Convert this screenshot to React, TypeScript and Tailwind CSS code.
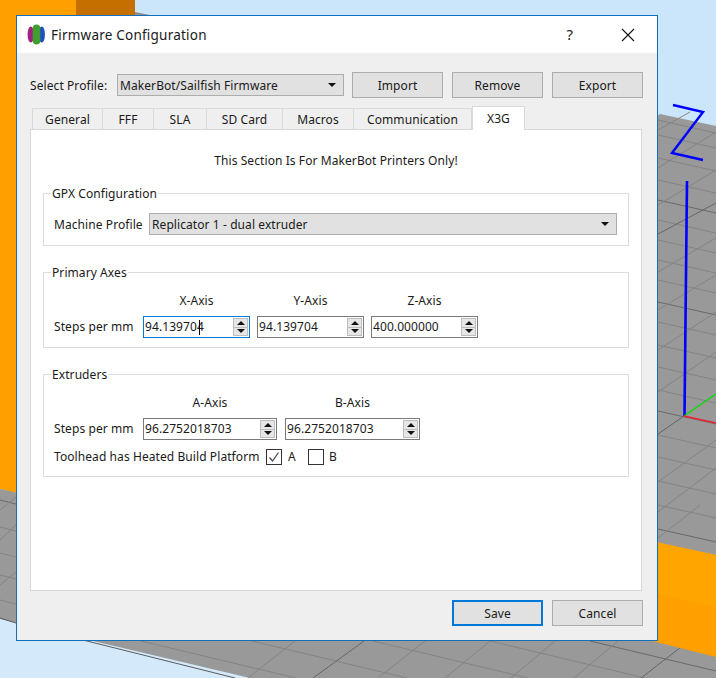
import React from "react";

const aRight = [120, 135, 158, 180, 220, 240, 260, 280, 322, 345, 367, 390, 435, 457, 481, 505];
const aRightDark = [200, 302, 411, 529];
const bRight: [number, number, number, number][] = [
  [658, 130, 690, 112], [658, 168, 716, 132], [658, 205, 716, 170], [658, 272, 716, 238], [658, 310, 716, 275], [658, 350, 716, 312], [658, 392, 716, 352],
  [658, 482, 716, 440], [658, 512, 716, 468], [658, 538, 700, 505],
];
const aBottom = [141, 252, 373, 490];
const bBottom: [number, number, number, number][] = [
  [248, 678, 295, 641], [378, 678, 425, 641], [445, 678, 490, 641], [511, 678, 555, 641], [574, 678, 618, 641],
];

function Scene() {
  return (
    <svg className="absolute left-0 top-0" width="716" height="678" viewBox="0 0 716 678">
      <rect width="716" height="678" fill="#cbe6fa" />
      <polygon points="0,618 250,678 0,678" fill="#d4e9f9" />
      <polygon points="0,0 76,0 76,20 16,20 16,493 0,489" fill="#ff9f00" />
      <polygon points="76,0 135,0 135,20 76,20" fill="#c46f00" />
      <polygon points="135,12 150,15 135,20" fill="#8f8f8f" />
      <polygon points="0,489 120,515 660,114 716,126 716,678 250,678 0,619" fill="#999999" />
      {aRight.map((y) => (
        <line key={y} x1="658" y1={y} x2="716" y2={y + 13} stroke="#848484" strokeWidth="1" />
      ))}
      {aRightDark.map((y) => (
        <line key={y} x1="658" y1={y} x2="716" y2={y + 13} stroke="#6a6a6a" strokeWidth="1" />
      ))}
      {bRight.map(([a, b, c, d]) => (
        <line key={`${a}-${b}`} x1={a} y1={b} x2={c} y2={d} stroke="#848484" strokeWidth="1" />
      ))}
      <line x1="658" y1="234" x2="716" y2="203" stroke="#666666" />
      <line x1="658" y1="434" x2="684" y2="416" stroke="#666666" />
      {aBottom.map((x) => (
        <line key={x} x1={x} y1="641" x2={x + 155} y2="678" stroke="#848484" />
      ))}
      <line x1="590" y1="641" x2="716" y2="671" stroke="#6a6a6a" />
      {bBottom.map(([a, b, c, d]) => (
        <line key={a} x1={a} y1={b} x2={c} y2={d} stroke="#848484" />
      ))}
      <line x1="313" y1="678" x2="364" y2="641" stroke="#666666" />
      <line x1="641" y1="678" x2="690" y2="640" stroke="#666666" />
      <polygon points="600,530 716,555 716,657 600,628" fill="#ff9f00" />
      <polygon points="600,530 716,555 716,607 600,580" fill="#ffa500" />
      <line x1="83" y1="640" x2="235" y2="678" stroke="#5c5c5c" strokeWidth="1" />
      <line x1="0" y1="618" x2="16" y2="623" stroke="#5c5c5c" />
      <line x1="0" y1="500" x2="16" y2="504" stroke="#6a6a6a" />
      <line x1="0" y1="527" x2="16" y2="531" stroke="#848484" />
      <line x1="0" y1="553" x2="16" y2="557" stroke="#848484" />
      <line x1="0" y1="575" x2="16" y2="579" stroke="#848484" />
      <line x1="0" y1="600" x2="16" y2="604" stroke="#848484" />
      <line x1="0" y1="510" x2="16" y2="497" stroke="#848484" />
      <line x1="0" y1="540" x2="16" y2="525" stroke="#848484" />
      <line x1="0" y1="585" x2="16" y2="572" stroke="#848484" />
      <polyline points="673,105 703,112 672,153 703,160" fill="none" stroke="#0000ff" strokeWidth="2.4" />
      <line x1="687" y1="181" x2="684.5" y2="416" stroke="#0000ff" strokeWidth="2.6" />
      <line x1="684" y1="416" x2="716" y2="394" stroke="#00e000" strokeWidth="1.4" />
      <line x1="684" y1="416" x2="716" y2="423" stroke="#f02030" strokeWidth="1.4" />
    </svg>
  );
}

function Arrow({ up, small }: { up?: boolean; small?: boolean }) {
  return (
    <svg width={small ? 8 : 9} height={small ? 4 : 5} viewBox="0 0 8 4" preserveAspectRatio="none">
      <polygon points={up ? "0,4 8,4 4,0" : "0,0 8,0 4,4"} fill="#111111" />
    </svg>
  );
}

function Combo({ label, className }: { label: string; className: string }) {
  return (
    <div className={`flex h-[22px] items-center justify-between border border-[#adadad] bg-[#e1e1e1] pl-[2px] pr-[7px] text-[#1a1a1a] ${className}`}>
      <span className="pt-px">{label}</span>
      <Arrow small />
    </div>
  );
}

function Button({ label, primary }: { label: string; primary?: boolean }) {
  return (
    <div className={`flex h-[26px] w-[91px] items-center justify-center bg-[#e1e1e1] pt-px text-[#1a1a1a] ${primary ? "border-2 border-[#0078d7]" : "border border-[#adadad]"}`}>
      {label}
    </div>
  );
}

function Spin({ value, className, focus, caret }: { value: string; className: string; focus?: boolean; caret?: boolean }) {
  return (
    <div className={`relative flex h-[22px] items-center justify-between border bg-white pl-[1px] pr-[1px] text-[#1a1a1a] ${focus ? "border-[#0078d7]" : "border-[#7a7a7a]"} ${className}`}>
      <span>{value}</span>
      {caret && <span className="absolute left-[55px] top-[3px] h-[15px] w-px bg-black" />}
      <div className="flex h-[18px] w-[15px] flex-col border border-[#bdbdbd] bg-[#e6e6e6]">
        <div className="flex flex-1 items-center justify-center border-b border-[#bdbdbd]"><Arrow up small /></div>
        <div className="flex flex-1 items-center justify-center"><Arrow small /></div>
      </div>
    </div>
  );
}

function Group({ title, className, children }: { title: string; className: string; children: React.ReactNode }) {
  return (
    <div className={`relative mx-[12px] border border-[#dcdcdc] pl-[10px] ${className}`}>
      <span className="absolute left-[7px] top-[-8px] bg-white px-px leading-[16px] text-[#1a1a1a]">{title}</span>
      {children}
    </div>
  );
}

function Check({ checked }: { checked?: boolean }) {
  return (
    <div className="flex h-[16px] w-[16px] items-center justify-center border border-[#333] bg-white">
      {checked && (
        <svg width="12" height="12" viewBox="0 0 12 12">
          <polyline points="1.5,6.5 4.5,10 10.5,1.5" fill="none" stroke="#444" strokeWidth="1.2" />
        </svg>
      )}
    </div>
  );
}

const tabs: [string, string][] = [
  ["General", "w-[71px]"],
  ["FFF", "w-[51px]"],
  ["SLA", "w-[53px]"],
  ["SD Card", "w-[76px]"],
  ["Macros", "w-[71px]"],
  ["Communication", "w-[118px]"],
];

export default function App() {
  return (
    <div className="relative h-[678px] w-[716px] overflow-hidden font-['Noto_Sans',sans-serif] text-[12px] tracking-[0.08px]">
      <Scene />
      <div className="absolute left-[16px] top-[15px] flex h-[626px] w-[642px] flex-col border border-[#0f6fb8] bg-[#efefef]">
        <div className="flex h-[37px] items-center bg-white pl-[10px] pr-[22px]">
          <svg width="19" height="21" viewBox="0 0 20 22">
            <ellipse cx="4" cy="11" rx="3.4" ry="8.5" fill="#a0207f" />
            <ellipse cx="15.5" cy="11" rx="3.4" ry="8.5" fill="#1f4fc0" />
            <rect x="6" y="0.5" width="8" height="21" rx="4" fill="#3f9f2f" />
          </svg>
          <span className="ml-[5px] pt-px text-[13.5px] tracking-[0.22px] text-[#1a1a1a]">Firmware Configuration</span>
          <span className="ml-auto mr-[48px] text-[15px] text-[#222]">?</span>
          <svg width="14" height="14" viewBox="0 0 14 14">
            <path d="M1 1 L13 13 M13 1 L1 13" stroke="#111" strokeWidth="1.1" />
          </svg>
        </div>

        <div className="mt-[19px] flex h-[26px] items-center pl-[13px]">
          <span className="w-[87px] pt-px text-[#1a1a1a]">Select Profile:</span>
          <Combo label="MakerBot/Sailfish Firmware" className="w-[227px]" />
          <div className="ml-[8px] flex gap-[9px]">
            <Button label="Import" />
            <Button label="Remove" />
            <Button label="Export" />
          </div>
        </div>

        <div className="relative z-10 mt-[8px] flex h-[24px] items-end pl-[15px]">
          {tabs.map(([label, w]) => (
            <div key={label} className={`flex h-[22px] items-center justify-center border border-b-0 border-l-0 border-[#d9d9d9] first:border-l ${w} text-[#1a1a1a]`}>
              {label}
            </div>
          ))}
          <div className="flex h-[24px] w-[53px] items-center justify-center border border-b-0 border-[#d9d9d9] bg-white text-[#1a1a1a]">X3G</div>
        </div>

        <div className="ml-[13px] mt-[-1px] h-[462px] w-[612px] border border-[#d9d9d9] bg-white">
          <div className="mt-[23px] h-[16px] text-center leading-[16px] text-[#1a1a1a]">This Section Is For MakerBot Printers Only!</div>

          <Group title="GPX Configuration" className="mt-[24px] h-[53px] pt-[19px]">
            <div className="flex items-center">
              <span className="w-[95px] pt-px text-[#1a1a1a]">Machine Profile</span>
              <Combo label="Replicator 1 - dual extruder" className="w-[468px]" />
            </div>
          </Group>

          <Group title="Primary Axes" className="mt-[26px] h-[76px] pt-[20px]">
            <div className="flex h-[16px] items-center pl-[89px] text-center text-[#1a1a1a]">
              <span className="w-[107px]">X-Axis</span>
              <span className="ml-[7px] w-[107px]">Y-Axis</span>
              <span className="ml-[7px] w-[107px]">Z-Axis</span>
            </div>
            <div className="mt-[7px] flex items-center">
              <span className="w-[89px] text-[#1a1a1a]">Steps per mm</span>
              <Spin value="94.139704" className="w-[107px]" focus caret />
              <Spin value="94.139704" className="ml-[7px] w-[107px]" />
              <Spin value="400.000000" className="ml-[7px] w-[107px]" />
            </div>
          </Group>

          <Group title="Extruders" className="mt-[26px] h-[103px] pt-[20px]">
            <div className="flex h-[16px] items-center pl-[89px] text-center text-[#1a1a1a]">
              <span className="w-[134px]">A-Axis</span>
              <span className="ml-[8px] w-[135px]">B-Axis</span>
            </div>
            <div className="mt-[7px] flex items-center">
              <span className="w-[89px] text-[#1a1a1a]">Steps per mm</span>
              <Spin value="96.2752018703" className="w-[134px]" />
              <Spin value="96.2752018703" className="ml-[8px] w-[135px]" />
            </div>
            <div className="mt-[7px] flex h-[20px] items-center text-[#1a1a1a]">
              <span className="w-[212px]">Toolhead has Heated Build Platform</span>
              <Check checked />
              <span className="ml-[6px] w-[20px]">A</span>
              <Check />
              <span className="ml-[5px]">B</span>
            </div>
          </Group>
        </div>

        <div className="mt-[9px] flex justify-end gap-[9px] pr-[14px]">
          <Button label="Save" primary />
          <Button label="Cancel" />
        </div>
      </div>
    </div>
  );
}
